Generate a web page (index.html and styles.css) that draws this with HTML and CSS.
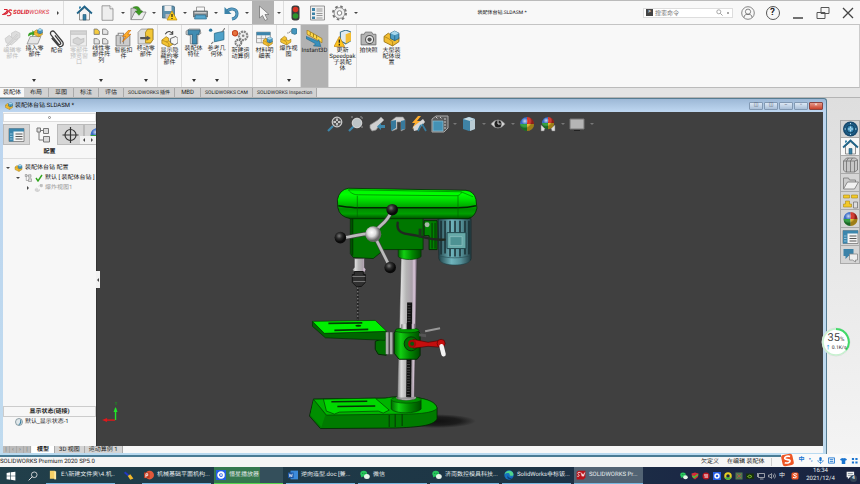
FILE: index.html
```html
<!DOCTYPE html>
<html lang="zh-CN">
<head>
<meta charset="utf-8">
<title>装配体台钻.SLDASM *</title>
<link rel="stylesheet" href="styles.css">
</head>
<body>
<svg class="defs" aria-hidden="true">
  <defs>
    <linearGradient id="steel"><stop offset="0" stop-color="#777"/><stop offset=".2" stop-color="#ddd"/><stop offset=".45" stop-color="#b5b5b5"/><stop offset=".75" stop-color="#aaa0aa"/><stop offset=".85" stop-color="#dcc8dc"/><stop offset="1" stop-color="#665a68"/></linearGradient>
    <linearGradient id="cover" x2="0" y2="1"><stop offset="0" stop-color="#00ef00"/><stop offset=".2" stop-color="#0f0"/><stop offset=".35" stop-color="#00e600"/><stop offset=".6" stop-color="#00a800"/><stop offset=".68" stop-color="#008c00"/><stop offset=".84" stop-color="#00a000"/><stop offset="1" stop-color="#005000"/></linearGradient>
    <linearGradient id="cyl"><stop offset="0" stop-color="#006a00"/><stop offset=".25" stop-color="#12d012"/><stop offset=".6" stop-color="#008a00"/><stop offset="1" stop-color="#004a00"/></linearGradient>
    <linearGradient id="motor"><stop offset="0" stop-color="#24474d"/><stop offset=".4" stop-color="#6fb4bc"/><stop offset=".7" stop-color="#559199"/><stop offset="1" stop-color="#29484e"/></linearGradient>
    <radialGradient id="ball" cx=".4" cy=".35"><stop offset="0" stop-color="#777"/><stop offset=".5" stop-color="#2c2c2c"/><stop offset="1" stop-color="#0a0a0a"/></radialGradient>
    <radialGradient id="hub" cx=".4" cy=".4"><stop offset="0" stop-color="#fff"/><stop offset=".5" stop-color="#ddd"/><stop offset="1" stop-color="#666"/></radialGradient>
    <radialGradient id="shade"><stop offset="0" stop-color="#111"/><stop offset=".6" stop-color="#1c1c1c"/><stop offset="1" stop-color="#404040"/></radialGradient>
    <radialGradient id="globe"><stop offset="0" stop-color="#8fd0ee"/><stop offset=".4" stop-color="#2a78a5"/><stop offset="1" stop-color="#103f63"/></radialGradient>
    <radialGradient id="gloss" cx=".35" cy=".3"><stop offset="0" stop-color="#fff" stop-opacity=".75"/><stop offset=".5" stop-color="#fff" stop-opacity="0"/><stop offset="1" stop-opacity=".35"/></radialGradient>
  </defs>
  <symbol id="part" viewBox="0 0 16 16"><path d="M1 6l4-3 3 2v3l3 1 4-2v4l-6 4-8-4z" fill="#f2bd32" stroke="#96700f" stroke-width=".8"/><path d="M1 6l4 2 4 3v4" fill="none" stroke="#a67d17" stroke-width=".7"/><path d="M7 3l4-2 4 2v5l-4 2-4-2z" fill="#4d9cc4" stroke="#1c5576" stroke-width=".7"/><path d="M7 3l4 2 4-2-4-2z" fill="#a9d8ed"/><path d="M11 5v5" stroke="#1c5576" stroke-width=".6"/></symbol>
  <symbol id="ypart" viewBox="0 0 16 16"><path d="M1 8l5-4 3 2v3l3 1 3-2v4l-6 4-8-4z" fill="#f5c431" stroke="#94720e" stroke-width=".8"/><path d="M1 8l5 2 3 2v4M6 10l3-1" fill="none" stroke="#a67d17" stroke-width=".7"/></symbol>
  <symbol id="home" viewBox="0 0 16 16"><path d="M3 7v8h10V7L8 3z" fill="#f4f4f4" stroke="#777" stroke-width=".8"/><path d="M.6 8.500L8 1.500l7.400 7" fill="none" stroke="#1f6388" stroke-width="1.800"/><path d="M2.500 4V1.500h2V3" fill="#3b83a8"/><path d="M6.500 15V9.500h3V15z" fill="#3680a6" stroke="#245873" stroke-width=".6"/></symbol>
  <symbol id="new" viewBox="0 0 16 16"><path d="M2.500 .8h8l3 3v11.500h-11z" fill="#eee" stroke="#888" stroke-width=".8"/><path d="M10.500.8v3h3" fill="#fff" stroke="#888" stroke-width=".8"/></symbol>
  <symbol id="open" viewBox="0 0 18 16"><path d="M1 15V3h5l1 2h5v3" fill="#ccc" stroke="#777" stroke-width=".8"/><path d="M1 15L5 7h12l-4 8z" fill="#eee" stroke="#777" stroke-width=".8"/><path d="M3 2c5-2 8 0 8 4h2.500L9.500 10.500 5.500 6H8c0-2-2-3-5-4z" fill="#3e9b22" stroke="#247012" stroke-width=".5"/></symbol>
  <symbol id="save" viewBox="0 0 16 16"><path d="M1 1h11l1 1v11H1z" fill="#5d90ac" stroke="#375c72" stroke-width=".7"/><path d="M3 1h7v5H3z" fill="#eee"/><path d="M4 9h6v4H4z" fill="#bbb"/><path d="M10.500 6l5 9h-10z" fill="#ffd21d" stroke="#b9860c" stroke-width=".7"/><path d="M10.500 9v3m0 1v1" stroke="#222" stroke-width="1.200"/></symbol>
  <symbol id="print" viewBox="0 0 16 16"><path d="M4 6V2h8v4" fill="#f8f8f8" stroke="#888" stroke-width=".8"/><path d="M1 6h14v6H1z" fill="#7c858a" stroke="#565e62" stroke-width=".7"/><path d="M2 7h12v1.500H2z" fill="#ccc"/><path d="M3 10h10l1 4H2z" fill="#57a6cd" stroke="#2c6b8b" stroke-width=".7"/></symbol>
  <symbol id="undo" viewBox="0 0 16 16"><path d="M3.500 6.500c3-4 10-3 10 2 0 3-2 5-5 5.500" fill="none" stroke="#2c6f93" stroke-width="3"/><path d="M3.500 6.500c3-4 10-3 10 2 0 3-2 5-5 5.500" fill="none" stroke="#579ac0" stroke-width="1.800"/><path d="M1 2v7h7z" fill="#3c83a9"/></symbol>
  <symbol id="cursor" viewBox="0 0 16 16"><path d="M4 1v12l3-2.500 2.500 5 2.500-1.200L9.500 9.500h4z" fill="#f6f6f6" stroke="#777" stroke-width=".8"/></symbol>
  <symbol id="traffic" viewBox="0 0 16 16"><rect x="4" y=".5" width="8" height="15" rx="3" fill="#3b3b3b"/><circle cx="8" cy="4.500" r="2.800" fill="#d83425"/><circle cx="8" cy="11" r="2.800" fill="#2d962d"/></symbol>
  <symbol id="list" viewBox="0 0 16 16"><path d="M1 1h14v14H1z" fill="#eee" stroke="#808080" stroke-width=".8"/><path d="M2.500 3h3v3h-3zm0 4.500h3v2.500h-3zm0 4h3V14h-3z" fill="#3c82a7"/><path d="M7 4h6M7 6h6M7 8.500h6M7 10.500h6M7 13h6" stroke="#999"/></symbol>
  <symbol id="props" viewBox="0 0 16 16"><path d="M.5 1.500h15v13H.5z" fill="#f4f4f4" stroke="#777" stroke-width=".8"/><path d="M.5 1.500h15v3H5v10H.5z" fill="#3b86ad"/><path d="M7 7h7M7 9.500h7M7 12h7" stroke="#555"/><path d="M1.500 7h2.500M1.500 9.500h2.500M1.500 12h2.500" stroke="#a7d2e6" stroke-width=".8"/></symbol>
  <symbol id="gear" viewBox="0 0 16 16"><circle cx="8" cy="8" r="6.500" fill="none" stroke="#777" stroke-width="2" stroke-dasharray="2.500 2.600"/><circle cx="8" cy="8" r="5.400" fill="#f2f2f2" stroke="#888" stroke-width=".9"/><circle cx="8" cy="8" r="2.300" fill="#fff" stroke="#777" stroke-width=".9"/></symbol>
  <symbol id="user" viewBox="0 0 16 16"><g fill="none" stroke="#555" stroke-width=".8"><circle cx="8" cy="8" r="7.200"/><circle cx="8" cy="6.500" r="3"/><path d="M3.500 13c0-3 2-3.500 4.500-3.500s4.500.5 4.500 3.500"/></g></symbol>
  <symbol id="lens" viewBox="0 0 8 8"><circle cx="3.200" cy="3.200" r="2.300" fill="none" stroke="#777" stroke-width=".7"/><path d="M5 5l2.500 2.500" stroke="#777" stroke-width=".8"/></symbol>
  <symbol id="edit" viewBox="0 0 16 16"><g fill="#ddd" stroke="#c8c8c8" stroke-width=".7"><path d="M1 8l4-3 3 3 5-2v3l-6 5-5-2z"/><path d="M7 3l4-2 4 2v4l-4 2-4-2z"/><path d="M2 15L12 4l1 1L4 15z"/></g></symbol>
  <symbol id="insert" viewBox="0 0 16 16"><path d="M1 15L4 8h10l-3 7z" fill="#e5e5e5" stroke="#888" stroke-width=".7"/><path d="M2 8c0-3 1-4 4-4V2l3 3-3 3V6C4 6 4 7 2 8z" fill="#36a024"/><use href="#part" x="7" width="9" height="9"/></symbol>
  <symbol id="clip" viewBox="0 0 16 16"><path d="M6.500 5l5 6.500c1.200 1.800-.6 3-1.800 1.500L3 4.800C1 2 4.300-.4 6.300 2l7.200 8.800c2.500 3.700-1.800 6.500-4.300 3.500L3.500 7.500" fill="none" stroke="#3e3e3e" stroke-width="1.200"/></symbol>
  <symbol id="preview" viewBox="0 0 16 16"><path d="M.5 1h15v14H.5z" fill="#eee" stroke="#ccc"/><path d="M.5 1h15v3H.5zM3 9l4-2 3 2 3-1v3l-5 3-5-2z" fill="#d5d5d5" stroke="#c6c6c6"/></symbol>
  <symbol id="pattern" viewBox="0 0 16 16"><g fill="#e4e4e4" stroke="#777" stroke-width=".8"><path d="M1 1h3l2 2v3H1z" fill="#f5cb3d"/><path d="M9 1h3l2 2v3H9zM1 10h3l2 2v3H1zM9 10h3l2 2v3H9z"/></g></symbol>
  <symbol id="smart" viewBox="0 0 16 16"><path d="M1 5h13v10H1z" fill="#ccc" stroke="#777" stroke-width=".8"/><path d="M3 5V3h5v2M5 6v7m3-7v7" stroke="#888" fill="#eee"/><path d="M13 0L7 6h3l-3 5 8-7h-3l3-4z" fill="#ffad25" stroke="#c3640d" stroke-width=".6"/></symbol>
  <symbol id="move" viewBox="0 0 16 16"><path d="M1 4l3-3h11v10l-3 4H1z" fill="#dedede" stroke="#888" stroke-width=".7"/><path d="M8 4l2-3h5v10l-2 3H8z" fill="#f3c737" stroke="#9b7914" stroke-width=".7"/><path d="M3 8.500h6V7l4 2.500L9 12v-1.500H3z" fill="#555"/></symbol>
  <symbol id="showhide" viewBox="0 0 16 16"><use href="#ypart" y="3" width="13" height="13"/><path d="M9 8l5-2 2 2v4l-3 2-4-2z" fill="#f5f5f5" stroke="#555" stroke-width=".8"/><path d="M4 4c2-4 6-3 7 0M11 1v3H8" fill="none" stroke="#444"/></symbol>
  <symbol id="feature" viewBox="0 0 16 16"><path d="M1 3l3-2h10l1 4-3 2v8H5V7L1 6z" fill="#cfd3d5" stroke="#777" stroke-width=".7"/><path d="M3 2h11l-1 4h-2v9H7V6H3z" fill="#418db2" stroke="#205c7c" stroke-width=".7"/></symbol>
  <symbol id="refgeo" viewBox="0 0 16 16"><path d="M6 5l9-2v8l-9 2z" fill="#4fa2c9" stroke="#236786" stroke-width=".7"/><path d="M3 15l2-2m8-9l3-4" stroke="#777"/><circle cx="2.500" cy="2" r="1.600" fill="#2d79a1"/></symbol>
  <symbol id="motion" viewBox="0 0 16 16"><circle cx="10.500" cy="5.500" r="4" fill="#eee" stroke="#888" stroke-width="2" stroke-dasharray="2 .7"/><circle cx="6" cy="12" r="2.800" fill="#eee" stroke="#777" stroke-width="1.800" stroke-dasharray="1.600 .6"/><circle cx="2.800" cy="3" r="2.500" fill="#e6733d" stroke="#c6421e"/><circle cx="10.500" cy="5.500" r="1.200" fill="#888"/></symbol>
  <symbol id="bom" viewBox="0 0 16 16"><path d="M.5 2h13v10H.5z" fill="#f3f3f3" stroke="#888" stroke-width=".7"/><path d="M.5 2h13v3H.5z" fill="#3d85ac"/><path d="M5 5v7M9 5v7M1 8h12" stroke="#999" stroke-width=".6"/><use href="#part" x="6" y="6" width="10" height="10"/></symbol>
  <symbol id="explode" viewBox="0 0 16 16"><use href="#ypart" y="5" width="11" height="11"/><path d="M7 5l5-3" stroke="#777" stroke-dasharray="1 .6"/><path d="M11 1l2-1 3 1v4l-2 1-3-1z" fill="#4596bd" stroke="#23617d" stroke-width=".6"/></symbol>
  <symbol id="instant" viewBox="0 0 16 16"><path d="M1 0l14 8v4L1 4z" fill="#ffd94c" stroke="#a67b14" stroke-width=".7"/><path d="M4 2v3m3-1.500v3M10 5v3" stroke="#7d640d" stroke-width=".7"/><path d="M0 8l9 5-2 2 7 .5L12 9l-1 1.500L0 6z" fill="#3890bd" stroke="#1d5f80" stroke-width=".5"/></symbol>
  <symbol id="speedpak" viewBox="0 0 16 16"><path d="M6 2l5-2 5 2v8l-5 3-5-3z" fill="#dfeaf0" stroke="#36718e"/><path d="M11 4v9l5-3V2z" fill="#f2bd32"/><path d="M5 6l5 9.500H0z" fill="#ffc51f" stroke="#b97c0b" stroke-width=".6"/><path d="M5 9v3m0 1v1.500" stroke="#222" stroke-width="1.200"/></symbol>
  <symbol id="camera" viewBox="0 0 16 16"><path d="M1 4h3l1-2h6l1 2h3v10H1z" fill="#b5b5b5" stroke="#6f6f6f" stroke-width=".8"/><circle cx="9" cy="9" r="3.800" fill="#eee" stroke="#555"/><circle cx="9" cy="9" r="2" fill="#555"/></symbol>
  <symbol id="rgb" viewBox="0 0 16 16"><path d="M8 8V1a7 7 0 0 0-7 7z" fill="#3166c5"/><path d="M8 8h7a7 7 0 0 0-7-7z" fill="#d93025"/><path d="M8 8H1a7 7 0 0 0 7 7z" fill="#29a039"/><path d="M8 8v7a7 7 0 0 0 7-7z" fill="#f1c024"/><circle cx="8" cy="8" r="7" fill="url(#gloss)"/></symbol>
  <symbol id="zoomfit" viewBox="0 0 16 16"><path d="M1 15l5-5" stroke="#3f86a9" stroke-width="2.200"/><circle cx="10" cy="6" r="4.800" fill="#555" stroke="#ccc" stroke-width="1.200"/><path d="M10 2.500v7M6.500 6h7" stroke="#eee" stroke-width="1.400" stroke-dasharray="2.500 2"/></symbol>
  <symbol id="zoomarea" viewBox="0 0 16 16"><path d="M3 1h2m7 0h2v2M14 10v2" stroke="#999"/><path d="M1 15l5-5" stroke="#3f86a9" stroke-width="2.200"/><circle cx="9" cy="7" r="4.800" fill="#bcc4c7" stroke="#ddd"/></symbol>
  <symbol id="prev" viewBox="0 0 16 16"><path d="M1 9l8-5 3-3 3 3-3 3-5 7-4 1-2-3z" fill="#cfcfcf" stroke="#8f8f8f" stroke-width=".7"/><path d="M16 9h-4V7l-4 3.500 4 3.500v-2h4z" fill="#3e87aa"/></symbol>
  <symbol id="section" viewBox="0 0 16 16"><path d="M1 5l5-4h7l2 3v9l-4 2V6H7v7l-5 2z" fill="#d1d1d1" stroke="#888" stroke-width=".6"/><path d="M1 5l5-1v8l-5 3zM11 5l4-1v9l-4 1z" fill="#37799c"/></symbol>
  <symbol id="dynamic" viewBox="0 0 16 16"><path d="M7 0L1 7h3l-3 6 9-8H6l4-5z" fill="#ffad2d"/><path d="M2 11l10-8 2 3-7 8-4 1z" fill="#d8d8d8"/><path d="M11 8l4 7M10 9l-3 6" stroke="#367b9d" stroke-width="1.700"/></symbol>
  <symbol id="orient" viewBox="0 0 18 18"><path d="M1 4l4-3h12v12l-4 4H1z" fill="#5b5b5b" stroke="#aaa"/><path d="M5 2l2 2m2-2l2 2m3-1v11" stroke="#ccc" stroke-dasharray="2 1"/><path d="M2 6h10v10H2z" fill="#4491b4" stroke="#89bed4" stroke-width=".7"/></symbol>
  <symbol id="cube" viewBox="0 0 16 16"><path d="M2 3l6-2 6 2v10l-6 2-6-2z" fill="#3f83a5"/><path d="M2 3l6-2 6 2-5 2z" fill="#c7dce5"/><path d="M9 5l5-2v10l-5 2z" fill="#b9cbd3"/></symbol>
  <symbol id="eye" viewBox="0 0 18 16"><path d="M1 8q8-9 16 0-8 9-16 0z" fill="#d8d8d8" stroke="#888"/><circle cx="9" cy="8" r="4" fill="#202020"/><path d="M9 4v4h3" stroke="#eee" fill="none"/></symbol>
  <symbol id="books" viewBox="0 0 16 16"><path d="M1 4l3-3h9l2 2v10l-3 2H3l-2-2z" fill="#c7c7c7" stroke="#6e6e6e" stroke-width=".8"/><path d="M4 4v11M8 4v11M12 4v11M1 4h11l3-1M4 4l2-3M8 4l2-3" fill="none" stroke="#6e6e6e" stroke-width=".8"/></symbol>
  <symbol id="folder" viewBox="0 0 16 16"><path d="M1 14V3h5l1 2h6v3" fill="#ccc" stroke="#777" stroke-width=".8"/><path d="M1 14l4-7h11l-4 7z" fill="#f1f1f1" stroke="#777" stroke-width=".8"/></symbol>
  <symbol id="palette" viewBox="0 0 16 16"><path d="M1 2h6v3H1zm8 0h6v3H9zM3 8h4v3h2v3H1v-3h2z" fill="#f3c928" stroke="#a98819" stroke-width=".6"/><path d="M11 9h4v6h-4z" fill="#ddd" stroke="#777" stroke-width=".8"/></symbol>
  <symbol id="chat" viewBox="0 0 16 16"><path d="M1 2h10v7H6l-3 3V9H1z" fill="#3b82a8"/><path d="M7 7h8v6h-2v2l-3-2H7z" fill="#eee" stroke="#888" stroke-width=".8"/></symbol>
  <symbol id="tree" viewBox="0 0 16 16"><g fill="#ddd" stroke="#777"><path d="M3.500 5v8H8M4 3.500h4" fill="none"/><path d="M1.500 1H5v4H1.500zM8 1.500h5v5H8zM8 9.500h6V15H8z"/></g></symbol>
  <symbol id="target" viewBox="0 0 16 16"><g fill="none" stroke="#333" stroke-width="1.200"><circle cx="8" cy="8" r="5.500"/><path d="M8 0v16M0 8h16"/></g></symbol>
  <symbol id="sogou" viewBox="0 0 16 16"><rect x="1" y="1" width="14" height="14" rx="3" fill="#ee5524"/><path d="M12 4.500c-3-2-7-1-7 1s6 2 6 4-4 3-7 1" fill="none" stroke="#fff" stroke-width="2"/></symbol>
  <symbol id="wechat" viewBox="0 0 16 16"><ellipse cx="6" cy="6" rx="5.500" ry="4.800" fill="#27c75d"/><path d="M2 9l-.5 3L5 10z" fill="#27c75d"/><ellipse cx="11" cy="10.500" rx="4.600" ry="4" fill="#e7f4ea"/><circle cx="4.500" cy="5" r=".7"/><circle cx="8" cy="5" r=".7"/></symbol>
  <symbol id="sw" viewBox="0 0 16 16"><path d="M1 3l3-2h11v11l-3 3H1z" fill="#b9141c"/><path d="M7 4c-4-1-5 1-3 3s1 4-2 3M8 4l2 6 1-4 1 4 2-6" fill="none" stroke="#fff" stroke-width="1.200"/></symbol>
</svg>

<div class="app">
  <header class="titlebar">
    <div class="brand"><svg class="brand-mark" viewBox="0 0 11 9"><path d="M2 1h3c1 2-1 3-4 5 4 0 5-2 5-4M10 2C7 0 6 3 8 4s1 4-3 3" fill="none" stroke="#d92231" stroke-width="1.100"/></svg><span class="wordmark"><b>SOLID</b>WORKS</span><button class="caret fwd" aria-label="展开菜单"></button></div>
    <nav class="quick" aria-label="快速访问">
      <button class="tool first" aria-label="主页"><svg><use href="#home"/></svg></button>
      <button class="tool" aria-label="新建"><svg><use href="#new"/></svg></button><button class="caret" aria-label="新建选项"></button>
      <button class="tool" aria-label="打开"><svg><use href="#open"/></svg></button><button class="caret" aria-label="打开选项"></button>
      <button class="tool" aria-label="保存"><svg><use href="#save"/></svg></button><button class="caret" aria-label="保存选项"></button>
      <button class="tool" aria-label="打印"><svg><use href="#print"/></svg></button><button class="caret" aria-label="打印选项"></button>
      <button class="tool" aria-label="撤销"><svg><use href="#undo"/></svg></button><button class="caret" aria-label="撤销选项"></button>
      <button class="tool pressed" aria-label="选择"><svg><use href="#cursor"/></svg></button><button class="caret boxed" aria-label="选择选项"></button>
      <button class="tool" aria-label="重建模型"><svg><use href="#traffic"/></svg></button>
      <button class="tool" aria-label="文件属性"><svg><use href="#list"/></svg></button>
      <button class="tool" aria-label="选项"><svg><use href="#gear"/></svg></button><button class="caret" aria-label="更多选项"></button>
    </nav>
    <h1 class="doc-name">装配体台钻.SLDASM *</h1>
    <label class="search"><span class="prompt">&gt;</span><input type="text" placeholder="搜索命令" aria-label="搜索命令"><svg><use href="#lens"/></svg><i class="dot-caret"></i></label>
    <div class="window-tools">
      <button aria-label="登录"><svg><use href="#user"/></svg></button>
      <button aria-label="帮助"><span class="help">?</span></button>
      <button aria-label="最小化"><svg viewBox="0 0 14 14"><path d="M2 12h10" stroke="#444" stroke-width="1.500"/></svg></button>
      <button aria-label="还原"><svg viewBox="0 0 14 14"><path d="M5 1.500h8v6H5zM1 6.500h8v6H1z" fill="#f7f7f7" stroke="#555"/></svg></button>
      <button aria-label="关闭"><svg viewBox="0 0 14 14"><path d="M2 2l10 10M12 2L2 12" stroke="#444" stroke-width="1.300"/></svg></button>
    </div>
  </header>

  <section class="ribbon" aria-label="命令管理器">
    <div class="group main-group">
      <button class="cmd" disabled><svg><use href="#edit"/></svg><span>编辑零部件</span></button>
      <button class="cmd menu"><svg><use href="#insert"/></svg><span>插入零部件</span></button>
      <button class="cmd"><svg><use href="#clip"/></svg><span>配合</span></button>
      <button class="cmd" disabled><svg><use href="#preview"/></svg><span>零部件预览窗口</span></button>
      <button class="cmd menu"><svg><use href="#pattern"/></svg><span>线性零部件阵列</span></button>
      <button class="cmd"><svg><use href="#smart"/></svg><span>智能扣件</span></button>
      <button class="cmd menu"><svg><use href="#move"/></svg><span>移动零部件</span></button>
    </div>
    <div class="group"><button class="cmd"><svg><use href="#showhide"/></svg><span>显示隐藏的零部件</span></button></div>
    <div class="group"><button class="cmd menu"><svg><use href="#feature"/></svg><span>装配体特征</span></button><button class="cmd menu"><svg><use href="#refgeo"/></svg><span>参考几何体</span></button></div>
    <div class="group"><button class="cmd"><svg><use href="#motion"/></svg><span>新建运动算例</span></button></div>
    <div class="group"><button class="cmd"><svg><use href="#bom"/></svg><span>材料明细表</span></button></div>
    <div class="group"><button class="cmd menu"><svg><use href="#explode"/></svg><span>爆炸视图</span></button></div>
    <div class="group"><button class="cmd wide active"><svg><use href="#instant"/></svg><span>Instant3D</span></button></div>
    <div class="group"><button class="cmd wide"><svg><use href="#speedpak"/></svg><span class="lines">更新
Speedpak
子装配
体</span></button></div>
    <div class="group last"><button class="cmd"><svg><use href="#camera"/></svg><span>拍快照</span></button><button class="cmd"><svg><use href="#part"/></svg><span>大型装配体设置</span></button></div>
  </section>

  <nav class="tabs" aria-label="选项卡">
    <button class="current">装配体</button><button>布局</button><button>草图</button><button>标注</button><button>评估</button><button class="long">SOLIDWORKS 插件</button><button>MBD</button><button class="long">SOLIDWORKS CAM</button><button class="long">SOLIDWORKS Inspection</button>
  </nav>

  <div class="workspace">
    <main class="document">
      <div class="doc-bar"><svg><use href="#part"/></svg><span>装配体台钻.SLDASM *</span>
        <div class="doc-buttons"><button aria-label="左侧平铺">◫</button><button aria-label="右侧平铺">◫</button><button aria-label="最小化文档">–</button><button aria-label="最大化文档">▫</button><button class="close" aria-label="关闭文档">×</button></div>
      </div>
      <div class="doc-body">
        <aside class="panel">
          <div class="grip"><i></i></div>
          <div class="panel-tabs">
            <button aria-label="特征树"><svg><use href="#props"/></svg></button>
            <button class="current" aria-label="配置管理"><svg><use href="#tree"/></svg></button>
            <button aria-label="尺寸专家"><svg><use href="#target"/></svg></button>
            <button aria-label="显示管理"><svg><use href="#rgb"/></svg></button>
            <div class="tab-arrows"><button class="caret back" aria-label="向左"></button><button class="caret fwd" aria-label="向右"></button></div>
          </div>
          <h2>配置</h2>
          <ul class="tree">
            <li><i class="caret"></i><svg><use href="#part"/></svg><span>装配体台钻 配置</span></li>
            <li class="level2"><i class="caret"></i><svg><use href="#tree"/></svg><svg class="tick" viewBox="0 0 8 8"><path d="M1 4l2 3 4-6" fill="none" stroke="#32a51e" stroke-width="1.400"/></svg><span>默认 [ 装配体台钻 ]</span></li>
            <li class="level3"><i class="caret fwd"></i><svg><use href="#explode"/></svg><span>爆炸视图1</span></li>
          </ul>
          <h3>显示状态(链接)</h3>
          <p class="state"><svg viewBox="0 0 8 8"><circle cx="4" cy="4" r="3.500" fill="#e0e8eb" stroke="#647b85" stroke-width=".7"/><path d="M5 1A3.500 3.500 0 0 1 3 7.300Q6 5 5 1z" fill="#367d9f"/></svg><span>默认_显示状态-1</span></p>
        </aside>
        <div class="viewport">
          <button class="splitter" aria-label="折叠面板"><i class="caret back"></i></button>
          <div class="hud">
            <button aria-label="整屏显示全图"><svg><use href="#zoomfit"/></svg></button><button aria-label="局部放大"><svg><use href="#zoomarea"/></svg></button><button aria-label="上一视图"><svg><use href="#prev"/></svg></button><button aria-label="剖面视图"><svg><use href="#section"/></svg></button><button aria-label="动态注解"><svg><use href="#dynamic"/></svg></button><button aria-label="视图定向"><svg class="big"><use href="#orient"/></svg></button><i class="caret"></i><button aria-label="显示样式"><svg><use href="#cube"/></svg></button><i class="caret"></i><button aria-label="隐藏显示项目"><svg><use href="#eye"/></svg></button><i class="caret"></i><button aria-label="编辑外观"><svg><use href="#rgb"/></svg></button><button aria-label="应用布景"><svg viewBox="0 0 16 16"><path d="M1 9l4 3-1 3H1zm14 0l-4 3 1 3h3z" fill="#ddd" stroke="#777" stroke-width=".5"/><use href="#rgb" x="1" width="14" height="14"/></svg></button><i class="caret"></i><button aria-label="视图设定"><svg viewBox="0 0 16 16"><path d="M1 3h14v10H1z" fill="#b5b5b5" stroke="#777"/><path d="M5 14.500h6" stroke="#222"/></svg></button><i class="caret"></i>
          </div>
          <svg class="model" viewBox="97 112 726 335" role="img" aria-label="台钻">
            <!-- base -->
            <ellipse cx="436" cy="422" rx="40" ry="7" fill="url(#shade)"/>
            <path d="M313 400l72-1c15-3 50-2 52 10v11c-4 7-20 8-42 9l-75 .5L309 417z" fill="#007b00" stroke="#022602" stroke-width=".8"/>
            <path d="M313 400l72-1c15-3 50-2 52 10-3 5-20 6-34 6l-77 1z" fill="#00b400" stroke="#034003" stroke-width=".7"/>
            <path d="M313 401l12 15-4 12-11-12z" fill="#008f00"/>
            <path d="M323 400l52-1 14 12-6 3-5-2-39 1-5 2-8-3z" fill="#00d800" stroke="#034003" stroke-width=".7"/>
            <path d="M331 402.500l36-.5M337 407.500l38-.5" stroke="#063306" stroke-width="1.500"/>
            <path d="M389 416v12m6-13v13m7-13v12" stroke="#044004" stroke-width="1.200"/>
            <path d="M391 401v9c4 5 25 5 30 0v-9z" fill="url(#cyl)" stroke="#043004" stroke-width=".6"/>
            <ellipse cx="406" cy="400.500" rx="15" ry="3.500" fill="#009000" stroke="#034003" stroke-width=".6"/>
            <ellipse cx="406" cy="398.500" rx="10" ry="2.500" fill="#ccc" stroke="#444" stroke-width=".6"/>
            <!-- column and rack -->
            <path d="M401 258h16l-3 141h-17z" fill="url(#steel)" stroke="#333" stroke-width=".5"/>
            <path d="M409.500 303l-1 95" stroke="#111" stroke-width="5"/><path d="M409 303l-1 95" stroke="#555" stroke-width="3" stroke-dasharray=".7 2"/>
            <!-- work table -->
            <path d="M375 342l11-4v18l-8-1-3-5z" fill="#007000" stroke="#032a03"/>
            <path d="M312 322l12 12 62-2-1 9-60-2.500L312 327z" fill="#006600" stroke="#032a03" stroke-width=".7"/>
            <path d="M312 322l63-1 11.500 11-62.500 2z" fill="#00f000" stroke="#034003" stroke-width=".7"/>
            <path d="M328 324l34-.5M334 331l34-1" stroke="#044004" stroke-width="1.800"/><ellipse cx="358" cy="326.500" rx="3" ry="1" fill="#033803"/>
            <path d="M387 333v22m4-22v22" stroke="#aaa" stroke-width="3"/><path d="M389 332v24m4-24v24" stroke="#444"/>
            <path d="M396 330h21l3 4v22l-3 4h-18l-5-6v-20z" fill="url(#cyl)" stroke="#042a04"/>
            <ellipse cx="407" cy="331" rx="12" ry="2.500" fill="#009a00" stroke="#053405" stroke-width=".6"/>
            <path d="M401 330v-5l14-.5v5z" fill="url(#steel)"/><path d="M409 324v6" stroke="#111" stroke-width="5"/>
            <path d="M419 334l7 1v3l-7-1z" fill="#555"/><path d="M425 332l15-3" stroke="#999" stroke-width="2"/>
            <circle cx="411" cy="344.500" r="7" fill="#007000" stroke="#053805"/><path d="M413 340l15 3 13-2c5 0 5 6 0 7l-13-1-15 2z" fill="#c50e0e" stroke="#480202" stroke-width=".6"/><circle cx="412" cy="344.500" r="4" fill="#a60909"/><circle cx="412" cy="344.500" r="2" fill="#0c590c"/>
            <circle cx="441" cy="344" r="4" fill="#c50e0e" stroke="#480202" stroke-width=".6"/><path d="M441.500 347l2 8" stroke="#f4f4f4" stroke-width="4.500" stroke-linecap="round"/>
            <!-- motor -->
            <path d="M438 219h33v40c-1 8-31 8-32 0z" fill="url(#motor)" stroke="#182b2e"/>
            <path d="M441 221v34m4-34v33m5-33v12m5-12v12m5-12v12m5-12v34m4-34v34M450 249v8m5-8v8m5-8v8" stroke="#182d31" stroke-width="1.500"/>
            <path d="M439 256c8 3 23 3 31 0v5c-2 6-28 6-30 0z" fill="url(#motor)" stroke="#24464b" stroke-width=".6"/>
            <path d="M447 233h19v16h-19z" fill="#67aaa9" stroke="#20474d"/><path d="M450 237h12v9h-12z" fill="#4d9293" stroke="#9bc9c7" stroke-width=".6"/>
            <path d="M424 221h13v29h-8V236h-5z" fill="#008200" stroke="#033003"/><path d="M432 223v26m3-26v26" stroke="#044c04" stroke-width="1.500"/>
            <circle cx="427" cy="225" r="2.500" fill="#a8b7a8"/>
            <!-- head and spindle -->
            <path d="M398 249h23v8c-3 4-20 4-23 0z" fill="url(#cyl)" stroke="#043004" stroke-width=".6"/>
            <path d="M350 216h73v34h-39l-11 9-20-1-3-4z" fill="#007700" stroke="#033003" stroke-width=".8"/><path d="M352 217v39" stroke="#003f00" stroke-width="2"/>
            <path d="M397.500 223c-2 12 9 11 19 13s15 5 28 4" fill="none" stroke="#202820" stroke-width="2.400" stroke-linecap="round"/><path d="M420 229v9" stroke="#1b361b" stroke-width="3"/>
            <path d="M354 259h10v9l2 2-2 3h-10l-2-3 2-2z" fill="url(#steel)" stroke="#333" stroke-width=".5"/>
            <path d="M354 272h9v3h2v8l-4 4h-5l-4-4v-8h2z" fill="#303030" stroke="#151515"/><path d="M352 277h13m-12 5h12" stroke="#777"/>
            <path d="M357.500 287v34" stroke="#222" stroke-width="2"/><path d="M357.500 288v32" stroke="#999" stroke-dasharray="1.500 2"/>
            <!-- belt cover -->
            <path d="M348 188.500l118 2q8 1 10 9l1 9q-2 9-9 10.500H350q-11-2-12.500-11l-.5-8q2-10 11-11.500z" fill="url(#cover)" stroke="#022a02" stroke-width=".8"/>
            <path d="M348 190l113 2 12 5M348 190c3 4 6 5 10 5l98 1c4 0 6-3 5-4" fill="none" stroke="#006400" stroke-width=".6"/>
            <path d="M338 206c7 1 12 2 20 2h100c8 0 14-1 18-2" fill="none" stroke="#032503" stroke-width="1.500"/>
            <path d="M357 196v22m101-22v22" stroke="#006000" stroke-width=".6"/>
            <!-- feed handle -->
            <g fill="none" stroke="#444" stroke-width="4"><path d="M340 238c15 0 15-4 32-4"/><path d="M373 234c5-9 13-8 19-24"/><path d="M373 234l16 32"/></g>
            <g fill="none" stroke="#bbb" stroke-width="2.800"><path d="M340 238c15 0 15-4 32-4"/><path d="M373 234c5-9 13-8 19-24"/><path d="M373 234l16 32"/></g>
            <g fill="url(#ball)"><circle cx="340" cy="238" r="5.800"/><circle cx="392" cy="210" r="5.800"/><circle cx="390" cy="268" r="5.800"/></g><circle cx="373" cy="234.500" r="8" fill="url(#hub)"/>
            <!-- axis triad -->
            <path d="M114.500 421v-12" stroke="#20e629" stroke-width="1.400"/><path d="M112.500 413l2-5 2 5z" fill="#20e629"/><path d="M114 421h-9" stroke="#e0181b" stroke-width="1.400"/><path d="M106 419l-5 2 5 2z" fill="#e0181b"/><path d="M114 403l1 1 1-1m-1 1v2" stroke="#169a1c" fill="none" stroke-width=".7"/>
          </svg>
        </div>
      </div>
      <div class="sheet-tabs"><div class="pager"><button aria-label="第一">|</button><button aria-label="上一">‹</button><button aria-label="下一">›</button><button aria-label="最后">|</button></div><button class="current">模型</button><button>3D 视图</button><button>运动算例 1</button></div>
    </main>
    <aside class="taskpane">
      <button aria-label="资源"><svg viewBox="0 0 16 16"><circle cx="8" cy="8" r="7.500" fill="url(#globe)"/><path d="M8 2v12M2 8h12" stroke="#b7def0" stroke-dasharray="1.500 2"/><circle cx="8" cy="8" r="4" fill="none" stroke="#113f5e"/></svg></button>
      <button class="current" aria-label="主页"><svg><use href="#home"/></svg></button>
      <button aria-label="设计库"><svg><use href="#books"/></svg></button>
      <button aria-label="文件探索器"><svg><use href="#folder"/></svg></button>
      <button aria-label="视图调色板"><svg><use href="#palette"/></svg></button>
      <button aria-label="外观"><svg><use href="#rgb"/></svg></button>
      <button aria-label="自定义属性"><svg><use href="#props"/></svg></button>
      <button aria-label="论坛"><svg><use href="#chat"/></svg></button>
    </aside>
    <div class="meter"><svg viewBox="0 0 30 30"><circle cx="15" cy="15" r="14" fill="#fff" stroke="#ddd"/><circle cx="15" cy="15" r="13" fill="none" stroke="#c6f1cf" stroke-width="1.500"/><path d="M15 2a13 13 0 0 1 10 21" fill="none" stroke="#42d868" stroke-width="2"/></svg><div><strong>35<small>%</small></strong><span><em>↑</em> 0.1K/s</span></div></div>
  </div>

  <footer class="status"><span class="product">SOLIDWORKS Premium 2020 SP5.0</span><span>欠定义</span><span class="editing">在编辑 装配体</span></footer>

  <div class="taskbar">
    <button class="icon-only" aria-label="开始"><svg viewBox="0 0 16 16"><path d="M1 3l6-1v5.500H1zm7-1l7-1v6.500H8zM1 8.500h6V14l-6-1zm7 0h7V15l-7-1z" fill="#fff"/></svg></button>
    <button class="icon-only" aria-label="搜索"><svg viewBox="0 0 16 16"><circle cx="10" cy="6" r="4.500" fill="none" stroke="#ddd" stroke-width="1.400"/><path d="M7 9l-6 6" stroke="#ddd" stroke-width="1.600"/></svg></button>
    <button class="task"><svg viewBox="0 0 16 16"><path d="M3 1h8l1 13H3z" fill="#f6cf66"/><path d="M10 2h3v13h-3z" fill="#ffe9a4"/></svg><span>E:\新建文件夹\4.机...</span></button>
    <button class="icon-only" aria-label="画笔"><svg viewBox="0 0 16 16"><path d="M1 2l7 6" stroke="#2238c4" stroke-width="3"/><path d="M6 8l4-3 5 7-5 2z" fill="#f2b92b"/></svg></button>
    <button class="task"><svg viewBox="0 0 16 16"><circle cx="9" cy="8" r="7" fill="#e1583a"/><path d="M0 4h9v9H0z" fill="#bf391f"/><path d="M3 12V6h3v3H3" fill="none" stroke="#fff" stroke-width="1.300"/></svg><span>机械基础平面机构...</span></button>
    <button class="task playing"><svg viewBox="0 0 16 16"><path d="M0 0h16v16H0z" fill="#245fe2"/><circle cx="8" cy="8" r="4.500" fill="none" stroke="#fff" stroke-width="3"/><path d="M7 6l4 2-4 2z" fill="#fff"/></svg><span>恒星播放器</span></button>
    <button class="task"><svg viewBox="0 0 16 16"><path d="M4 1h12v14H4z" fill="#3c8bdb"/><path d="M0 4h9v9H0z" fill="#1854a4"/><path d="M2 6l1 5 1.500-4L6 11l1-5" fill="none" stroke="#fff"/></svg><span>逆向造型.doc [兼...</span></button>
    <button class="task"><svg><use href="#wechat"/></svg><span>微信</span></button>
    <button class="task"><svg><use href="#wechat"/></svg><span>济南数控模具科技...</span></button>
    <button class="task"><svg viewBox="0 0 16 16"><circle cx="8" cy="8" r="7.500" fill="#1673be"/><path d="M1 7C2-1 15-1 15 7c0 3-5 3-6 1 1-4-5-4-8-1z" fill="#4fd48c"/><path d="M7 7c-2 4 2 7 7 5-4 5-12 2-7-5z" fill="#0b3f78"/></svg><span>SolidWorks非标钣...</span></button>
    <button class="task active"><svg><use href="#sw"/></svg><span>SOLIDWORKS Pr...</span></button>
    <div class="tray">
      <svg><use href="#wechat"/></svg>
      <svg viewBox="0 0 16 16"><path d="M1 3l7-2 7 2-1 7-6 5-6-5z" fill="#d42c37"/><path d="M3 7l3 4 8-6" fill="none" stroke="#38d33e" stroke-width="2.500"/></svg>
      <svg viewBox="0 0 16 16"><circle cx="8" cy="8" r="7" fill="#bd1620"/><path d="M4 6h8M5 10h7" stroke="#fff" stroke-width="2"/></svg>
      <svg viewBox="0 0 16 16"><path d="M0 0h16v16H0z" fill="#285fe5"/><circle cx="8" cy="8" r="4" fill="none" stroke="#fff" stroke-width="3"/></svg>
      <svg viewBox="0 0 16 16"><circle cx="8" cy="8" r="5.500" fill="none" stroke="#e8cf24" stroke-width="4"/><path d="M3 11a6 6 0 0 0 10 0" stroke="#38b54a" stroke-width="4" fill="none"/></svg>
      <svg viewBox="0 0 16 16"><path d="M1 1h14v14H1z" fill="#53794f"/><path d="M4 4l8 8m0-8l-8 8" stroke="#a4584f" stroke-width="2"/></svg>
      <svg viewBox="0 0 16 16"><path d="M0 3h16v11H0z" fill="#18310e"/><path d="M3 9q5-6 9 0-5 5-9 0" fill="none" stroke="#76b82a" stroke-width="2"/></svg>
      <svg viewBox="0 0 16 16"><path d="M3 3h12v8H3zM6 14h7M1 2v8" fill="none" stroke="#ddd" stroke-width="1.300"/></svg>
      <svg viewBox="0 0 16 16"><path d="M1 6h3l3-3v10l-3-3H1zM10 5q3 3 0 6m3-8q4 5 0 10" fill="none" stroke="#ddd" stroke-width="1.200"/></svg>
      <span>中</span>
      <svg><use href="#sogou"/></svg>
    </div>
    <time class="clock"><span>16:34</span><span>2021/12/4</span></time>
    <button class="notice" aria-label="通知"><svg viewBox="0 0 16 16"><path d="M1 1h12v9H6l-3 3v-3H1z" fill="#f1f1f1"/><path d="M3 4h8M3 7h6" stroke="#567"/></svg><b>4</b></button>
  </div>
  <div class="ime"><svg class="logo"><use href="#sogou"/></svg><span>中</span><span>•,</span><svg viewBox="0 0 8 8"><rect x="2.700" y="0" width="2.600" height="5" rx="1.300" fill="#1b75d0"/><path d="M1 3.500c0 4 6 4 6 0M4 6v2" fill="none" stroke="#1b75d0" stroke-width=".8"/></svg><svg viewBox="0 0 8 8"><path d="M.5 1h7v6h-7zM2 3h4M2 5h4" fill="none" stroke="#1b75d0"/></svg><svg viewBox="0 0 8 8"><path d="M2.500 1q1.500 1 3 0L8 2.500 7 4H6v4H2V4H1L0 2.500z" fill="#1b75d0"/></svg><svg viewBox="0 0 8 8"><path d="M1 1h2.500v2.500H1zm4 0h2.500v2.500H5zM1 5h2.500v2.500H1zm4 0h2.500v2.500H5z" fill="#1b75d0"/></svg></div>
</div>
</body>
</html>
```
FILE: styles.css
```css
* { box-sizing: border-box; }
body {
  margin: 0;
  font: 6px/8px Roboto, "Noto Sans CJK SC", sans-serif;
  text-rendering: geometricPrecision;
  color: #222;
}
button {
  margin: 0;
  padding: 0;
  border: 0;
  background: none;
  font: inherit;
  text-rendering: inherit;
  color: inherit;
}
svg { display: block; flex: none; }
.defs { position: absolute; width: 0; height: 0; }

.app {
  position: relative;
  display: grid;
  grid-template-rows: 25px 63px 10px minmax(0, 1fr) 10px 17px;
  grid-template-columns: minmax(0, 1fr);
  height: 100vh;
  background: #e6e6e6;
  overflow: hidden;
}

.caret {
  display: flex;
  flex: none;
  align-items: center;
  justify-content: center;
  width: 11px;
}
.caret::before {
  content: "";
  border: 2px solid transparent;
  border-top-color: #444;
  border-bottom-width: 0;
}
.caret.fwd::before { border: 2px solid transparent; border-left-color: #444; border-right-width: 0; }
.caret.back::before { border: 2px solid transparent; border-right-color: #444; border-left-width: 0; }

/* title bar */
.titlebar {
  display: flex;
  background: #f8f8f8;
  border-top: 1px solid #bbb;
  border-bottom: 1px solid #c4c4c4;
}
.brand {
  display: flex;
  align-items: center;
  width: 64px;
  padding-left: 2px;
  border-right: 1px solid #ddd;
}
.brand-mark { width: 11px; height: 10px; }
.wordmark { flex: 1; font-size: 6px; font-style: italic; color: #dc3440; }
.wordmark b { font-weight: 900; }
.quick { display: flex; }
.tool { display: flex; align-items: center; justify-content: center; width: 20px; }
.tool.first { margin: 0 3px 0 10px; }
.tool svg { width: 17px; height: 16px; }
.tool.pressed { width: 22px; background: #b2b2b2; }
.caret.boxed { border-right: 1px solid #ddd; width: 10px; }
.boxed ~ .tool { width: 22px; }
.doc-name {
  flex: 1;
  align-self: center;
  margin: 0;
  text-align: center;
  font-size: 5px;
  font-weight: 400;
  color: #222;
}
.search {
  display: flex;
  align-self: center;
  align-items: center;
  gap: 2px;
  width: 90px;
  height: 10px;
  padding: 0 2px;
  border: 1px solid #ddd;
  background: #fff;
}
.search svg { width: 7px; height: 7px; }
.search input {
  flex: 1;
  min-width: 0;
  padding: 0;
  border: 0;
  background: none;
  font: inherit;
}
.search input::placeholder { color: #777; }
.prompt { width: 7px; height: 7px; background: #444; color: #fff; line-height: 6px; text-align: center; }
.dot-caret { width: 2px; height: 2px; margin: 0 1px 0 2px; background: #aaa; }
.window-tools { display: flex; margin-left: 2px; }
.window-tools button { display: grid; place-items: center; width: 25px; }
.window-tools svg { width: 14px; height: 14px; }
.help {
  width: 14px;
  height: 14px;
  border: 1px solid #555;
  border-radius: 50%;
  font-size: 10px;
  font-weight: 600;
  line-height: 12px;
}

/* ribbon */
.ribbon {
  display: flex;
  background: #f8f8f8;
  border-right: 1px solid #ccc;
  border-bottom: 1px solid #bbb;
}
.group { display: flex; border-right: 1px solid #ddd; }
.group.last { border: 0; }
.cmd {
  position: relative;
  display: flex;
  flex-direction: column;
  align-items: center;
  gap: 1px;
  width: 23px;
  padding-top: 5px;
  line-height: 6px;
}
.main-group { width: 158px; padding-left: 1px; }
.main-group .cmd { flex: 1; }
.cmd svg { width: 17px; height: 17px; }
.cmd span { max-width: 18px; }
.cmd .lines { white-space: pre-line; }
.cmd.menu { padding-top: 3px; }
.cmd.menu::after {
  content: "";
  margin: auto 0 5px;
  border: 2px solid transparent;
  border-top: 3px solid #333;
  border-bottom-width: 0;
}
.cmd.wide { width: 27px; }
.cmd.wide span { max-width: 27px; }
.cmd.active { background: #b2b2b2; }
.cmd:disabled { color: #bbb; }

/* ribbon tabs */
.tabs { display: flex; background: #e4e4e4; border-bottom: 1px solid #b4b4b4; }
.tabs button {
  padding: 0 6px;
  border-right: 1px solid #aaa;
  background: #d2d2d2;
  white-space: nowrap;
}
.tabs .long { padding: 0 4px; font-size: 5px; }
.tabs .current { padding: 0 3px; border: 0; background: #f8f8f8; }

/* document window */
.workspace { position: relative; display: flex; }
.document {
  display: flex;
  flex: 1;
  flex-direction: column;
  min-width: 0;
  padding: 0 3px;
  border: 1px solid #567c91;
  border-left: 0;
  border-bottom: 2px solid #497b94;
  border-radius: 0 3px 0 0;
  background: linear-gradient(#9db8d6, #bcd5ef 12px, #c0dbef);
  box-shadow: inset 0 -2px #b9daf0;
}
.doc-bar { display: flex; align-items: center; gap: 2px; height: 13px; padding-left: 2px; color: #111; }
.doc-bar svg { width: 8px; height: 8px; }
.doc-buttons { display: flex; gap: 1px; margin-left: auto; }
.doc-buttons button {
  width: 14px;
  height: 8px;
  border: 1px solid #8299b3;
  border-radius: 1px;
  background: linear-gradient(#dce8f5, #a9bfd8);
  font-size: 5px;
  line-height: 5px;
  color: #445;
}
.doc-buttons .close { background: linear-gradient(#e69b8c, #c9412a); border-color: #8b4440; color: #fff; }
.doc-body { display: flex; flex: 1; min-height: 0; }

.panel { display: flex; flex-direction: column; width: 94px; background: #f7f7f7; border-right: 1px solid #333; }
.grip { display: grid; place-items: center; height: 9px; margin: 1px 0 2px; border: 1px solid #ddd; background: #fff; }
.grip i { width: 3px; height: 3px; border: 1px solid #888; border-radius: 50%; }
.panel-tabs { position: relative; display: flex; height: 21px; overflow: hidden; }
.panel-tabs > button {
  display: grid;
  place-items: center;
  flex: none;
  width: 27px;
  border: 1px solid #bbb;
  background: #d6d6d6;
}
.panel-tabs > .current { border-color: #f7f7f7; background: #f7f7f7; }
.panel-tabs svg { width: 17px; height: 16px; }
.tab-arrows { position: absolute; right: 0; bottom: 1px; display: flex; height: 8px; background: #f2f2f2; }
.tab-arrows .caret { width: 8px; }
.panel h2, .panel h3 { margin: 0; text-align: center; font-size: 6px; color: #222; }
.panel h2 { height: 14px; border-bottom: 1px solid #ddd; line-height: 13px; }
.panel h3 { height: 11px; border: 1px solid #ccc; line-height: 9px; }
.tree { flex: 1; margin: 0; padding: 4px 0 0; list-style: none; }
.tree li { display: flex; align-items: center; gap: 1px; height: 10px; white-space: nowrap; color: #111; }
.tree .caret { width: 10px; }
.tree svg { width: 9px; height: 8px; margin-right: 1px; }
.tree .tick { width: 8px; }
.tree .level2 { padding-left: 10px; }
.tree .level3 { padding-left: 20px; color: #999; }
.level3 svg { opacity: .5; filter: grayscale(1); }
.state { display: flex; gap: 2px; height: 29px; margin: 0; padding: 1px 0 0 12px; }
.state svg { width: 8px; height: 8px; }

.viewport { position: relative; display: flex; flex: 1; flex-direction: column; min-width: 0; background: #404040; }
.hud {
  position: absolute;
  inset: 2px 0 auto;
  display: flex;
  justify-content: center;
  height: 20px;
}
.hud button { display: grid; place-items: center; width: 21px; }
.hud svg { width: 16px; height: 16px; }
.hud .big { width: 18px; height: 18px; }
.hud .caret { width: 8px; }
.hud .caret::before { border-top-color: #777; }
.model { width: 100%; height: 100%; min-height: 0; }
.splitter { position: absolute; top: 159px; left: -1px; display: flex; width: 4px; height: 17px; background: #f2f2f2; }
.splitter .caret { width: 4px; align-self: center; }

.sheet-tabs { display: flex; height: 9px; padding-bottom: 2px; background: #f7f7f7 content-box; overflow: hidden; }
.sheet-tabs button { padding: 0 4px; border-right: 1px solid #aaa; background: #d4d4d4; line-height: 7px; }
.sheet-tabs .current { background: #fff; font-weight: 600; padding: 0 5px; }
.pager { display: flex; margin-right: 1px; }
.pager button { width: 7px; padding: 0; color: #777; background: #bbb; }

/* task pane */
.taskpane { display: flex; flex-direction: column; align-items: flex-end; width: 33px; padding-top: 22px; background: linear-gradient(#dedede, #f4f4f4); }
.taskpane button { display: grid; place-items: center; width: 20px; height: 18px; border: 1px solid #aaa; border-top-width: 0; background: #d5d5d5; }
.taskpane button:first-child { border-top-width: 1px; }
.taskpane .current { background: #f8f8f8; }
.taskpane svg { width: 17px; height: 16px; }

.meter { position: absolute; right: 9px; top: 229px; display: grid; place-items: center; width: 30px; height: 30px; }
.meter > * { grid-area: 1 / 1; width: 100%; }
.meter div { display: flex; flex-direction: column; align-items: center; }
.meter strong { font-size: 11px; font-weight: 400; line-height: 10px; color: #444; }
.meter small { font-size: 6px; }
.meter span { font-size: 5px; line-height: 6px; }
.meter em { font-style: normal; font-weight: 700; color: #1990e5; }

/* status bar */
.status { display: flex; align-items: center; gap: 8px; background: #f5f5f5; white-space: nowrap; }
.product { flex: 1; color: #222; }
.editing { width: 45px; margin-right: 88px; border-right: 1px solid #ccc; }

/* taskbar */
.taskbar {
  display: flex;
  background: linear-gradient(90deg, #213f4a, #1d3545 60%, #1b2845 80%, #1a2340);
  color: #e5ebed;
}
.taskbar svg { width: 10px; height: 10px; }
.icon-only { display: grid; place-items: center; width: 22px; }
.icon-only + .task { margin-left: 2px; }
.task {
  display: flex;
  align-items: center;
  gap: 3px;
  width: 69px;
  margin-right: 3px;
  padding: 0 2px;
  border-bottom: 1px solid #76b7df;
  text-align: left;
  white-space: nowrap;
  overflow: hidden;
}
.task.playing { background: linear-gradient(90deg, #35784f 46px, #344f5b 46px); border-color: #57d450; }
.task.active { background: #526373; }
.tray { display: flex; align-items: center; gap: 3px; margin-left: auto; }
.tray svg { width: 8px; height: 8px; }
.tray svg:last-child { margin-left: 3px; }
.clock { display: flex; flex-direction: column; width: 43px; text-align: center; }
.notice { position: relative; width: 18px; padding-left: 4px; }
.notice b { position: absolute; right: 3px; bottom: 2px; width: 7px; height: 7px; border-radius: 50%; background: #345; font-size: 5px; line-height: 7px; }

/* input method bar */
.ime {
  position: absolute;
  right: 0;
  bottom: 18px;
  display: flex;
  align-items: center;
  justify-content: space-between;
  width: 79px;
  height: 12px;
  padding: 0 2px 0 0;
  background: #fafafa;
  color: #1b75d0;
  font-weight: 700;
}
.ime svg { width: 7px; height: 7px; }
.ime .logo { width: 13px; height: 14px; transform: rotate(-12deg); }
```
